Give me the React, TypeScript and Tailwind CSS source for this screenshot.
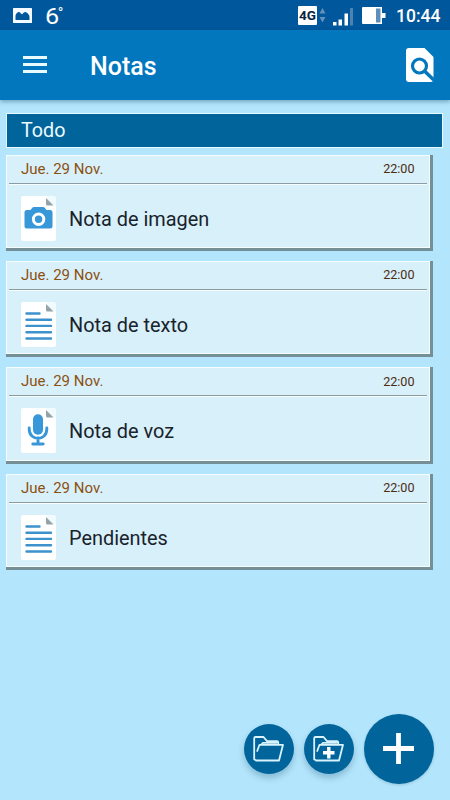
import React from 'react';

type NoteKind = 'image' | 'text' | 'voice';

interface Note {
  title: string;
  date: string;
  time: string;
  kind: NoteKind;
}

const notes: Note[] = [
  { title: 'Nota de imagen', date: 'Jue. 29 Nov.', time: '22:00', kind: 'image' },
  { title: 'Nota de texto', date: 'Jue. 29 Nov.', time: '22:00', kind: 'text' },
  { title: 'Nota de voz', date: 'Jue. 29 Nov.', time: '22:00', kind: 'voice' },
  { title: 'Pendientes', date: 'Jue. 29 Nov.', time: '22:00', kind: 'text' },
];

const StatusBar: React.FC = () => (
  <div className="flex h-[30px] items-center bg-[#01579b] text-white">
    <svg className="ml-[13px] mt-px h-[15px] w-[19px]" viewBox="0 0 19 15">
      <rect width="19" height="15" rx="0.5" fill="#f4faff" />
      <path d="M2.5 12V7.5C3.5 4.5 6 3 7.5 5L9 6.5C10.5 4.5 12 3 13.5 4.5C15 5.5 16.5 7 16.5 9V12Z" fill="#01579b" />
    </svg>
    <span className="ml-[13px] mt-[2px] origin-left scale-x-112 text-[22.5px] leading-none">6</span>
    <span className="mb-[4px] text-[15px] leading-none">°</span>

    {/* Network, battery and clock */}
    <svg className="ml-auto h-[30px] w-[91px]" viewBox="0 0 91 30">
      <rect x="0" y="6" width="19" height="19" rx="1" fill="#fff" />
      <text x="9.5" y="20" textAnchor="middle" fontSize="13" fontWeight="700" textLength="17" lengthAdjust="spacingAndGlyphs" fill="#08233f">4G</text>
      <path d="M21.5 13.5L24.5 8L27.5 13.5ZM21.5 17L24.5 22.5L27.5 17Z" fill="#6591b8" />
      <path d="M35 22H38.5V25.5H35ZM40.5 19.5H44V25.5H40.5ZM46.5 13.5H50V25.5H46.5Z" fill="#fff" />
      <path d="M52 8H55V25.5H52Z" fill="#4d83b1" />
      <path d="M65 7H84V13H87.5V18H84V24H65Q64 24 64 23V8Q64 7 65 7Z" fill="#fff" />
      <path d="M78 8.5H82.5V22.5H78Z" fill="#5e8fb8" />
    </svg>
    <span className="ml-[7px] mr-[10px] mt-[3px] w-[44px] whitespace-nowrap text-[17.5px] font-medium leading-none">10:44</span>
  </div>
);

const Header: React.FC = () => (
  <header className="flex h-[70px] items-center bg-[#0277bd] text-white shadow-[0_2px_4px_rgba(0,60,90,0.35)]">
    <div className="mb-[2px] ml-[23px] flex w-6 flex-col gap-1">
      <div className="h-[3px] bg-[#e9fbff]" />
      <div className="h-[3px] bg-[#e9fbff]" />
      <div className="h-[3px] bg-[#e9fbff]" />
    </div>
    <h1 className="ml-[43px] mt-[3px] text-[25px] font-medium leading-none">Notas</h1>
    <svg className="ml-auto mr-[16px] h-[34px] w-[28px]" viewBox="0 0 28 34">
      <path d="M3 0H18.5L27.5 9V31Q27.5 34 24.5 34H3Q0 34 0 31V3Q0 0 3 0Z" fill="#fff" />
      <circle cx="13.5" cy="18" r="7" fill="none" stroke="#0277bd" strokeWidth="3.2" />
      <path d="M18.5 23L27.8 32" stroke="#0277bd" strokeWidth="3.5" />
    </svg>
  </header>
);

const FileIcon: React.FC<{ kind: NoteKind }> = ({ kind }) => (
  <svg className="h-[45px] w-[35px] shrink-0" viewBox="0 0 35 45">
    <path d="M2 0H26L35 9V43Q35 45 33 45H2Q0 45 0 43V2Q0 0 2 0Z" fill="#fff" />
    <path d="M26 0H33Q35 0 35 2V9H26Z" fill="#f1fafd" />
    <path d="M25 2L32.5 9.5H26.5Q25 9.5 25 8Z" fill="#93a4a9" />
    {kind === 'text' && (
      <path d="M5.5 11.5H18.5M5.5 17.7H30M5.5 23.9H30M5.5 30.2H30M5.5 36.5H30" stroke="#3d91cd" strokeWidth="2.4" strokeLinecap="round" />
    )}
    {kind === 'image' && (
      <>
        <path d="M6 14H9.5L11.5 11.5Q12 11 13 11H22Q23 11 23.5 11.5L25.5 14H29Q31.5 14 31.5 16.5V30Q31.5 32.5 29 32.5H6Q3.5 32.5 3.5 30V16.5Q3.5 14 6 14Z" fill="#3797d9" />
        <circle cx="17.6" cy="23.2" r="5.2" fill="none" stroke="#fff" strokeWidth="3" />
      </>
    )}
    {kind === 'voice' && (
      <>
        <rect x="12" y="6.2" width="10" height="20.5" rx="5" fill="#3797d9" />
        <path d="M8.2 20V21C8.2 33.5 25.8 33.5 25.8 21V20M17 30V36M11.8 36H22.2" fill="none" stroke="#3797d9" strokeWidth="2.9" strokeLinecap="round" />
      </>
    )}
  </svg>
);

const NoteCard: React.FC<{ note: Note }> = ({ note }) => (
  <article className="h-[96.2px] w-[426.5px] border-b-[3px] border-r-[3px] border-[#758f96]">
    <div className="flex h-full flex-col border border-[#f5fdff] bg-[#d8f0fa]">
      <div className="mx-[2px] flex h-[28px] items-center justify-between border-b border-[#8b9ca2] pl-[12px] pr-[12px]">
        <span className="text-[15px] leading-none text-[#8c5010]">{note.date}</span>
        <span className="text-[12.6px] leading-none text-[#4b2c12]">{note.time}</span>
      </div>
      <div className="mx-[2px] flex flex-1 border-t border-[#f5fdff] pl-[12px] pt-[11px]">
        <FileIcon kind={note.kind} />
        <h2 className="ml-[13px] mt-[14px] text-[19.9px] leading-none text-[#18232b]">{note.title}</h2>
      </div>
    </div>
  </article>
);

const FolderIcon: React.FC<{ plus?: boolean }> = ({ plus }) => (
  <svg className="h-[26px] w-[31px]" viewBox="0 0 31 26">
    <path
      d="M4 24.5L1.2 23.5V2.2Q1.2 1 2.5 1H10.5L14 5.2H24Q25.3 5.2 25.3 7.5V8.5M4.2 15L6.5 8.8H30L26 24.5H3M8 8.8L10 6.8H23.5"
      fill="none"
      stroke="#d9f4fd"
      strokeWidth="1.8"
      strokeLinejoin="round"
      strokeLinecap="round"
    />
    {plus && <path d="M15.8 11V22.5M10 16.8H21.5" stroke="#fff" strokeWidth="3.4" />}
  </svg>
);

export default function App() {
  return (
    <div className="relative flex h-[800px] w-[450px] flex-col overflow-hidden bg-[#b3e5fc] font-['Roboto',sans-serif]">
      <StatusBar />
      <Header />

      <main className="flex flex-col pl-[6px] pt-[13px]">
        <div className="flex h-[35px] w-[437px] items-center border border-[#e6faff] bg-[#01649b] pl-[14px] text-[19.7px] leading-none text-[#eefaff]">
          Todo
        </div>
        <div className="mt-[7px] flex flex-col gap-[10px]">
          {notes.map((note) => (
            <NoteCard key={note.title} note={note} />
          ))}
        </div>
      </main>

      {/* Floating actions */}
      <div className="absolute bottom-[16.5px] right-[16.5px] flex items-center gap-[10px]">
        <button className="flex size-[50px] items-center justify-center rounded-full bg-[#01649b] shadow-[0_4px_6px_rgba(0,60,90,0.25)]">
          <FolderIcon />
        </button>
        <button className="flex size-[50px] items-center justify-center rounded-full bg-[#01649b] shadow-[0_4px_6px_rgba(0,60,90,0.25)]">
          <FolderIcon plus />
        </button>
        <button className="flex size-[70px] items-center justify-center rounded-full bg-[#01649b] shadow-[0_1px_3px_rgba(0,60,90,0.2)]">
          <svg className="size-[31px]" viewBox="0 0 31 31">
            <path d="M15.5 0V31M0 15.5H31" stroke="#fff" strokeWidth="4.8" />
          </svg>
        </button>
      </div>
    </div>
  );
}
